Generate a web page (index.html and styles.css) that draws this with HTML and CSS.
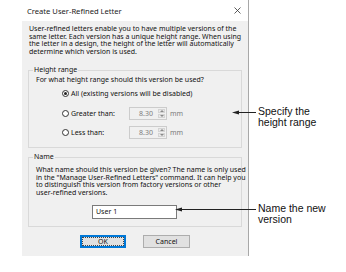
FILE: index.html
```html
<!DOCTYPE html>
<html>
<head>
<meta charset="utf-8">
<link rel="stylesheet" href="styles.css">
</head>
<body>
<div class="page">
  <div class="dialog">
    <div class="titlebar">
      <span class="title">Create User-Refined Letter</span>
      <svg class="close" width="7" height="7" viewBox="0 0 7 7"><path d="M0.5 0.5L6.5 6.5M6.5 0.5L0.5 6.5" stroke="#333" stroke-width="0.8" fill="none"/></svg>
    </div>
    <div class="body">
      <p class="intro">User-refined letters enable you to have multiple versions of the<br>same letter. Each version has a unique height range. When using<br>the letter in a design, the height of the letter will automatically<br>determine which version is used.</p>
      <div class="group g1">
        <span class="legend">Height range</span>
        <p class="q">For what height range should this version be used?</p>
        <div class="radio-row">
          <span class="radio checked"></span><span class="rlabel">All (existing versions will be disabled)</span>
        </div>
        <div class="radio-row">
          <span class="radio"></span><span class="rlabel fixed">Greater than:</span>
          <span class="spin"><span class="val">8.30</span><span class="arrows"><span class="up"></span><span class="down"></span></span></span><span class="unit">mm</span>
        </div>
        <div class="radio-row">
          <span class="radio"></span><span class="rlabel fixed">Less than:</span>
          <span class="spin"><span class="val">8.30</span><span class="arrows"><span class="up"></span><span class="down"></span></span></span><span class="unit">mm</span>
        </div>
      </div>
      <div class="group g2">
        <span class="legend">Name</span>
        <p class="q2">What name should this version be given? The name is only used<br>in the "Manage User-Refined Letters" command. It can help you<br>to distinguish this version from factory versions or other<br>user-refined versions.</p>
        <div class="name-row"><span class="textbox">User 1</span></div>
      </div>
      <div class="buttons">
        <span class="btn ok"><span class="focus">OK</span></span>
        <span class="btn cancel">Cancel</span>
      </div>
    </div>
  </div>
  <div class="note n1">Specify the<br>height range</div>
  <div class="note n2">Name the new<br>version</div>
  <svg class="arrows-layer" width="346" height="272" viewBox="0 0 346 272">
    <line x1="236" y1="112.5" x2="256" y2="112.5" stroke="#222" stroke-width="1"/>
    <polygon points="232,112.5 239,110.5 239,114.5" fill="#222"/>
    <line x1="179" y1="209.5" x2="256" y2="209.5" stroke="#222" stroke-width="1"/>
    <polygon points="175,209.5 182,207.5 182,211.5" fill="#222"/>
  </svg>
</div>
</body>
</html>
```
FILE: styles.css
```css
html, body { margin: 0; padding: 0; background: #fff; }
.page { position: relative; width: 346px; height: 272px; overflow: hidden; }
.dialog {
  margin-left: 22px; width: 226px;
  border-right: 1px solid #a8a8a8;
  display: flex; flex-direction: column;
  font-family: "Noto Sans", "Open Sans", sans-serif; font-size: 7px; color: #111;
}
.titlebar { height: 21px; background: #fff; display: flex; align-items: center; justify-content: space-between; padding: 0 7px 0 5px; }
.title { font-size: 7.6px; color: #222; }
.close { display: block; }
.body { background: #f0f0f0; padding: 4px 6px 8px 6px; }
.intro { margin: 0 0 0 1px; line-height: 7.7px; white-space: nowrap; }
.group { border: 1px solid #d9d9d9; position: relative; }
.legend { position: absolute; top: -4.5px; left: 4px; background: #f0f0f0; padding: 0 1px; line-height: 8px; }
.g1 { margin-top: 14px; height: 71px; padding: 5px 0 0 7px; }
.q { margin: 0; line-height: 8px; white-space: nowrap; }
.radio-row { display: flex; align-items: center; height: 19.5px; padding-left: 26px; }
.radio { width: 5px; height: 5px; border: 1px solid #333; border-radius: 50%; background: #fff; position: relative; margin-right: 2px; flex: none; }
.radio.checked::after { content: ""; position: absolute; left: 1px; top: 1px; width: 3px; height: 3px; border-radius: 50%; background: #222; }
.rlabel.fixed { width: 58px; }
.spin { display: flex; width: 36px; height: 11px; border: 1px solid #cccccc; background: #f0f0f0; flex: none; }
.val { flex: 1; text-align: right; color: #7d7d7d; line-height: 11px; padding-right: 4px; }
.arrows { width: 9px; display: flex; flex-direction: column; gap: 1px; padding: 1px; box-sizing: border-box; }
.up, .down { flex: 1; position: relative; background: #eaeaea; border: 1px solid #d4d4d4; }
.up::after { content: ""; position: absolute; left: 1px; top: 0px; border-left: 2px solid transparent; border-right: 2px solid transparent; border-bottom: 2px solid #8a8a8a; }
.down::after { content: ""; position: absolute; left: 1px; top: 0px; border-left: 2px solid transparent; border-right: 2px solid transparent; border-top: 2px solid #8a8a8a; }
.unit { color: #7d7d7d; margin-left: 3px; }
.g2 { margin-top: 9px; padding: 8px 0 7px 7px; }
.q2 { margin: 0; line-height: 7.7px; white-space: nowrap; }
.name-row { display: flex; padding-left: 56px; margin-top: 8px; }
.textbox { width: 80px; height: 12px; background: #fff; border: 1px solid #7a7a7a; line-height: 12px; padding-left: 3px; }
.buttons { display: flex; justify-content: center; gap: 17px; margin-top: 8px; }
.btn { height: 11px; background: #e1e1e1; border: 1px solid #adadad; display: flex; align-items: center; justify-content: center; }
.btn.ok { width: 44px; border: 1px solid #0078d7; box-shadow: inset 0 0 0 1px #0078d7; }
.btn.cancel { width: 45px; }
.focus { outline: 1px dotted #444; padding: 0 15px; line-height: 7px; }
.note { position: absolute; left: 258px; font-family: "Liberation Sans", Arial, sans-serif; font-size: 10.5px; line-height: 11px; color: #111; }
.n1 { top: 106px; }
.n2 { top: 203px; }
.arrows-layer { position: absolute; left: 0; top: 0; pointer-events: none; }
```
